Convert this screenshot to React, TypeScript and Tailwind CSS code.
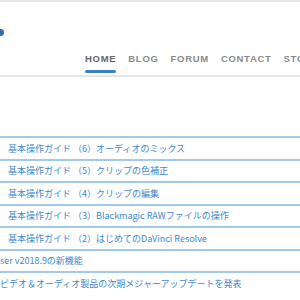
const NAV = ['HOME', 'BLOG', 'FORUM', 'CONTACT', 'STORE'];

const ROWS = [
  { text: '基本操作ガイド （6）オーディオのミックス', indent: true },
  { text: '基本操作ガイド （5）クリップの色補正', indent: true },
  { text: '基本操作ガイド （4）クリップの編集', indent: true },
  { text: '基本操作ガイド （3）Blackmagic RAWファイルの操作', indent: true },
  { text: '基本操作ガイド （2）はじめてのDaVinci Resolve', indent: true },
  { text: 'ser v2018.9の新機能', indent: false },
  { text: 'ビデオ＆オーディオ製品の次期メジャーアップデートを発表', indent: false },
];

export default function App() {
  return (
    <div className="h-[300px] w-[300px] overflow-hidden bg-white">
      {/* header */}
      <header className="relative h-[77px] border-y-2 border-[#e6e6e6] bg-white">
        <div className="absolute -left-[3px] top-[27px] h-[7px] w-[7px] rounded-full bg-[#2f6db5]" />
        <nav
          className="flex gap-[12px] pl-[85px] pt-[50px] text-[9.5px] font-bold tracking-[0.7px] text-[#8a8a8a]"
          style={{ fontFamily: '"Liberation Sans", Arial, sans-serif' }}
        >
          {NAV.map((n, i) => (
            <div key={n} className="flex flex-col whitespace-nowrap">
              <span className={i === 0 ? 'text-[#666]' : ''}>{n}</span>
              {i === 0 && <span className="mt-[4px] h-[3px] w-[31px] rounded-full bg-[#3a80c3]" />}
            </div>
          ))}
        </nav>
      </header>

      {/* list */}
      <ul
        className="mt-[59px] text-[9px] text-[#4189cb]"
        style={{ fontFamily: '"Noto Sans CJK JP", "Noto Sans", sans-serif' }}
      >
        {ROWS.map((r) => (
          <li
            key={r.text}
            className={`flex h-[22.5px] items-center whitespace-nowrap border-t-2 border-[#a3c9e8] ${r.indent ? 'pl-[8px]' : 'pl-0'}`}
          >
            {r.text}
          </li>
        ))}
      </ul>
    </div>
  );
}
